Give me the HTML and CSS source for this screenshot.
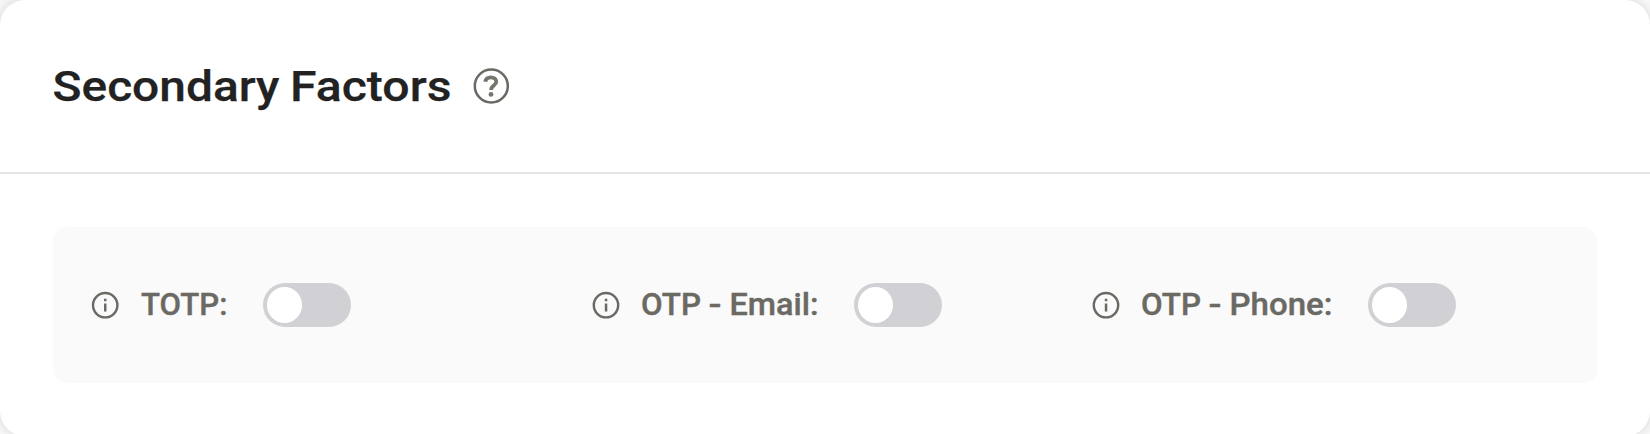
FILE: index.html
```html
<!DOCTYPE html>
<html lang="en">
<head>
<meta charset="utf-8">
<title>Secondary Factors</title>
<link rel="stylesheet" href="styles.css">
</head>
<body>
<section class="card">
  <header class="head">
    <h1 class="title"><svg width="400" height="60"><text y="45"><tspan x="-.5" textLength="227" lengthAdjust="spacingAndGlyphs">Secondary</tspan> <tspan x="237" textLength="161.5" lengthAdjust="spacingAndGlyphs">Factors</tspan></text></svg></h1>
    <svg class="help" viewBox="0 0 36 36" fill="none" stroke="#6b6963" stroke-width="2.5"><circle cx="18.3" cy="18" r="16.5"/><path d="M12.2 13.8c.5-3 2.7-4.5 5.6-4.5 3.2 0 5.5 1.8 5.5 4.5 0 3.9-5.2 3.7-5.2 8.2" stroke="#77756f" stroke-width="3.8"/><circle cx="18" cy="26.4" r="2.4" fill="#77756f" stroke="none"/></svg>
  </header>
  <div class="body">
    <div class="panel">
      <div class="factor">
        <svg class="info" viewBox="0 0 28 28"><circle cx="14.2" cy="14.2" r="12.2" fill="none" stroke="#6b6963" stroke-width="2.4"/><path d="M13 12.4h2.5v8.2H13zM13 7.7h2.5v2.6H13z" fill="#6b6963"/></svg>
        <svg class="label" width="87" height="40"><text x="0" y="29.7" textLength="86.5" lengthAdjust="spacingAndGlyphs">TOTP:</text></svg>
        <span class="toggle"></span>
      </div>
      <div class="factor">
        <svg class="info" viewBox="0 0 28 28"><circle cx="14" cy="14.2" r="12.2" fill="none" stroke="#6b6963" stroke-width="2.4"/><path d="M12.8 12.4h2.5v8.2h-2.5zM12.8 7.7h2.5v2.6h-2.5z" fill="#6b6963"/></svg>
        <svg class="label" width="177" height="40"><text y="29.7"><tspan x="-1" textLength="60" lengthAdjust="spacingAndGlyphs">OTP</tspan> <tspan x="66.5" textLength="13" lengthAdjust="spacingAndGlyphs">-</tspan> <tspan x="87.5" textLength="89" lengthAdjust="spacingAndGlyphs">Email:</tspan></text></svg>
        <span class="toggle"></span>
      </div>
      <div class="factor">
        <svg class="info" viewBox="0 0 28 28"><circle cx="14" cy="14.2" r="12.2" fill="none" stroke="#6b6963" stroke-width="2.4"/><path d="M12.8 12.4h2.5v8.2h-2.5zM12.8 7.7h2.5v2.6h-2.5z" fill="#6b6963"/></svg>
        <svg class="label" width="191" height="40"><text y="29.7"><tspan x="-1" textLength="60" lengthAdjust="spacingAndGlyphs">OTP</tspan> <tspan x="66.5" textLength="13" lengthAdjust="spacingAndGlyphs">-</tspan> <tspan x="87.5" textLength="103" lengthAdjust="spacingAndGlyphs">Phone:</tspan></text></svg>
        <span class="toggle"></span>
      </div>
    </div>
  </div>
</section>
</body>
</html>
```

FILE: styles.css
```css
* { box-sizing: border-box; }
html { overflow: hidden; }
body { margin: 0; height: 434px; background: #fafafa; font-family: Roboto, "Open Sans", sans-serif; overflow: hidden; }
.card { height: 436px; background: #fff; border-radius: 25px; box-shadow: 0 0 14px rgba(0, 0, 0, .16); }
.head { height: 174px; padding: 56px 53px 0; border-bottom: 2px solid #e4e4e4; display: flex; gap: 20px; }
.title { margin: 0; height: 60px; font-size: 43px; font-weight: 500; fill: #222; stroke: #222; stroke-width: .25px; stroke-linejoin: round; }
.title svg, .label { display: block; overflow: visible; }
.help { width: 36px; height: 36px; margin-top: 12px; }
.body { padding: 53px 53px 0; }
.panel { height: 156px; background: #fafafa; border-radius: 14px; padding-left: 38px; display: grid; grid-template-columns: 501px 500px 1fr; align-items: center; }
.factor { display: flex; align-items: center; }
.info { width: 28px; height: 28px; margin-right: 22px; }
.label { font-size: 31px; font-weight: 500; fill: #6b6963; stroke: #6b6963; stroke-width: .4px; stroke-linejoin: round; margin-right: 35px; }
.toggle { width: 88px; height: 44px; border-radius: 22px; background: #d1d0d5; padding: 4px; }
.toggle::before { content: ""; display: block; width: 35px; height: 36px; border-radius: 50%; background: #fff; }
```
